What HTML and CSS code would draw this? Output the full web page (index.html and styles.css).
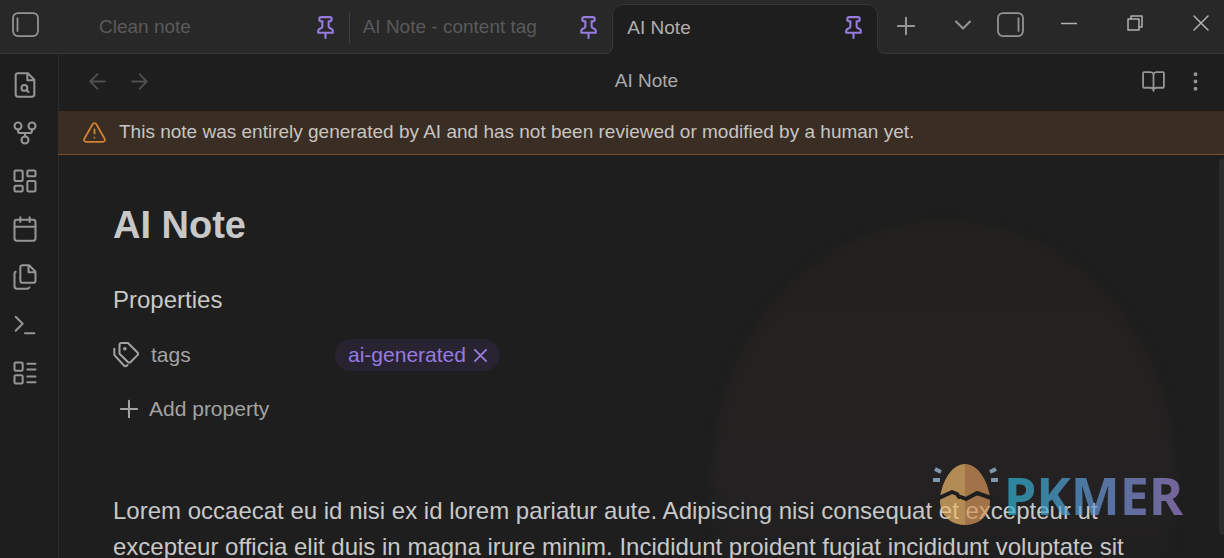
FILE: index.html
```html
<!DOCTYPE html>
<html lang="en">
<head>
<meta charset="utf-8">
<meta name="viewport" content="width=device-width, initial-scale=1">
<title>AI Note</title>
<link rel="stylesheet" href="styles.css">
</head>
<body>
<svg class="defs" aria-hidden="true">
  <symbol id="pin" viewBox="0 0 24 24"><path d="M12 17v5M9 10.76a2 2 0 0 1-1.11 1.79l-1.78.9A2 2 0 0 0 5 15.24V17h14v-1.76a2 2 0 0 0-1.11-1.79l-1.78-.9A2 2 0 0 1 15 10.76V6h1a2 2 0 0 0 0-4H8a2 2 0 0 0 0 4h1z"/></symbol>
  <symbol id="plus" viewBox="0 0 24 24"><path d="M5 12h14M12 5v14"/></symbol>
</svg>
<div class="app">
  <header class="titlebar">
    <button class="btn side-toggle" aria-label="Toggle left sidebar"><svg class="panel" viewBox="0 0 27 25"><rect x="1" y="1" width="25" height="23" rx="5"/><path d="M5.500 6v13"/></svg></button>
    <nav class="tabs" aria-label="Open notes">
      <a class="tab" href="#clean"><span class="tab-name">Clean note</span><svg class="icon pin"><use href="#pin"/></svg></a>
      <a class="tab divided" href="#content"><span class="tab-name">AI Note - content tag</span><svg class="icon pin"><use href="#pin"/></svg></a>
      <a class="tab active" href="#note" aria-current="page"><span class="tab-name">AI Note</span><svg class="icon pin"><use href="#pin"/></svg></a>
    </nav>
    <button class="btn new-tab" aria-label="New tab"><svg class="icon large"><use href="#plus"/></svg></button>
    <div class="window-tools">
      <button class="btn" aria-label="Tab list"><svg class="icon large" viewBox="0 0 24 24"><path d="m6 9 6 6 6-6"/></svg></button>
      <button class="btn" aria-label="Toggle right sidebar"><svg class="panel" viewBox="0 0 27 25"><rect x="1" y="1" width="25" height="23" rx="5"/><path d="M21.500 6v13"/></svg></button>
    </div>
    <div class="window-controls">
      <button class="btn" aria-label="Minimize"><svg class="control" viewBox="0 0 16 16"><path d="M0 8.500h16"/></svg></button>
      <button class="btn" aria-label="Restore"><svg class="control" viewBox="0 0 16 16"><path d="M1 4h11v11H1zM4 4V1h11v11h-3"/></svg></button>
      <button class="btn" aria-label="Close"><svg class="control" viewBox="0 0 16 16"><path d="m1 1 14 14M15 1 1 15"/></svg></button>
    </div>
  </header>

  <div class="workspace">
    <aside class="ribbon">
      <button class="btn" aria-label="Quick switcher"><svg class="icon large" viewBox="0 0 24 24"><path d="M14.500 2H6a2 2 0 0 0-2 2v16a2 2 0 0 0 2 2h12a2 2 0 0 0 2-2V7.500zM14 2v6h6"/><circle cx="11.500" cy="14.500" r="2.500"/><path d="m13.300 16.300 1.700 1.700"/></svg></button>
      <button class="btn" aria-label="Graph view"><svg class="icon large" viewBox="0 0 24 24"><circle cx="12" cy="18" r="3"/><circle cx="6" cy="6" r="3"/><circle cx="18" cy="6" r="3"/><path d="M18 9v1a2 2 0 0 1-2 2H8a2 2 0 0 1-2-2V9M12 12v3"/></svg></button>
      <button class="btn" aria-label="Canvas"><svg class="icon large" viewBox="0 0 24 24"><rect x="3" y="3" width="7" height="9" rx="1"/><rect x="14" y="3" width="7" height="5" rx="1"/><rect x="14" y="12" width="7" height="9" rx="1"/><rect x="3" y="16" width="7" height="5" rx="1"/></svg></button>
      <button class="btn" aria-label="Daily note"><svg class="icon large" viewBox="0 0 24 24"><rect x="3" y="4" width="18" height="18" rx="2"/><path d="M16 2v4M8 2v4M3 10h18"/></svg></button>
      <button class="btn" aria-label="Templates"><svg class="icon large" viewBox="0 0 24 24"><path d="M15.500 2H10a2 2 0 0 0-2 2v11a2 2 0 0 0 2 2h9a2 2 0 0 0 2-2V7.500zM15 2v6h6M4 7.500a1.500 1.500 0 0 0-1 1.500v11a2 2 0 0 0 2 2h9a2 2 0 0 0 1.700-1"/></svg></button>
      <button class="btn" aria-label="Command palette"><svg class="icon large" viewBox="0 0 24 24"><path d="m4 17 6-6-6-6M12 19h8"/></svg></button>
      <button class="btn" aria-label="Layouts"><svg class="icon large" viewBox="0 0 24 24"><rect x="3" y="3" width="7" height="7" rx="1"/><rect x="3" y="14" width="7" height="7" rx="1"/><path d="M14 4h7M14 9h7M14 15h7M14 20h7"/></svg></button>
    </aside>

    <main class="view">
      <div class="view-header">
        <div class="nav-buttons">
          <button class="btn" aria-label="Back" disabled><svg class="icon" viewBox="0 0 24 24"><path d="m12 19-7-7 7-7M19 12H5"/></svg></button>
          <button class="btn" aria-label="Forward" disabled><svg class="icon" viewBox="0 0 24 24"><path d="M5 12h14M12 5l7 7-7 7"/></svg></button>
        </div>
        <div class="view-title">AI Note</div>
        <div class="view-actions">
          <button class="btn" aria-label="Reading view"><svg class="icon" viewBox="0 0 24 24"><path d="M12 7v14M3 18a1 1 0 0 1-1-1V4a1 1 0 0 1 1-1h6a3 3 0 0 1 3 2 3 3 0 0 1 3-2h6a1 1 0 0 1 1 1v13a1 1 0 0 1-1 1h-6a4 4 0 0 0-3 1.500A4 4 0 0 0 9 18zM12 5v4"/></svg></button>
          <button class="btn" aria-label="More options"><svg class="icon" viewBox="0 0 24 24"><circle cx="12" cy="5" r="1"/><circle cx="12" cy="12" r="1"/><circle cx="12" cy="19" r="1"/></svg></button>
        </div>
      </div>
      <div class="banner" role="status">
        <svg class="icon" viewBox="0 0 24 24"><path d="m21.730 18-8-14a2 2 0 0 0-3.480 0l-8 14A2 2 0 0 0 4 21h16a2 2 0 0 0 1.730-3zM12 9v4M12 17h.01"/></svg>
        <span>This note was entirely generated by AI and has not been reviewed or modified by a human yet.</span>
      </div>
      <article class="note" id="note">
        <div class="glow"></div>
        <h1>AI Note</h1>
        <section class="properties">
          <h2>Properties</h2>
          <div class="property">
            <span class="property-key"><svg class="tag-icon" viewBox="0 0 26 26"><path d="M6.500 3a2 2 0 0 1 2-2H15l9.500 9.500a2 2 0 0 1 0 2.600l-6.900 6.900a2 2 0 0 1-2.800 0L6.500 11.700z"/><path d="M1.300 6.800v5.400a2 2 0 0 0 .6 1.400l9 9.900a2 2 0 0 0 3 0l.6-.5"/><circle cx="11.800" cy="6.800" r=".8"/></svg>tags</span>
            <span class="pill">ai-generated<button class="btn" aria-label="Remove tag"><svg class="remove" viewBox="0 0 14 14"><path d="m1 1 12 12M13 1 1 13"/></svg></button></span>
          </div>
          <button class="btn add"><svg class="icon large"><use href="#plus"/></svg>Add property</button>
        </section>
        <p>Lorem occaecat eu id nisi ex id lorem pariatur aute. Adipiscing nisi consequat et excepteur ut excepteur officia elit duis in magna irure minim. Incididunt proident fugiat incididunt voluptate sit</p>
        <div class="scrollbar"></div>
      </article>
    </main>
  </div>

  <div class="watermark">
    <svg class="egg" viewBox="0 0 65 62">
      <path fill="#f0b86a" d="M32 0C17 0 7 22 7 37s11 24 25 24z"/>
      <path fill="#d9965a" d="M32 0c15 0 25 22 25 37S46 61 32 61z"/>
      <path class="crack" d="m6 34 13-6 5 2 2 3M28 33l5 2 11-6 14 5"/>
      <path class="rays" d="m2 5 6 3M0 16h7M57 8l6-3M58 16h7"/>
    </svg>
    <span class="brand">PKMER</span>
  </div>
</div>
</body>
</html>
```
FILE: styles.css
```css
:root {
  --bg: #1e1e1e;
  --bar: #282828;
  --line: #363636;
  --text: #c8c8c8;
  --muted: #a3a3a3;
  --faint: #5a5a5a;
  --accent: #967be0;
}

* { box-sizing: border-box; }

body {
  margin: 0;
  background: var(--bg);
  color: var(--text);
  font-family: "Liberation Sans", Arial, sans-serif;
  font-size: 24px;
}

.defs { position: absolute; width: 0; height: 0; }

.app {
  position: relative;
  display: flex;
  flex-direction: column;
  height: 100vh;
  overflow: hidden;
}

svg { display: block; flex: none; fill: none; stroke: currentColor; stroke-linecap: round; stroke-linejoin: round; }
.icon { width: 25px; height: 25px; stroke-width: 1.75; }
.large { width: 28px; height: 28px; }
.panel { width: 27px; height: 25px; stroke-width: 1.75; }
.control { width: 16px; height: 16px; stroke-width: 1.5; }

.btn {
  display: flex;
  align-items: center;
  justify-content: center;
  padding: 0;
  border: 0;
  background: none;
  color: #959595;
  font: inherit;
}

.titlebar {
  display: flex;
  flex: none;
  height: 54px;
  background: var(--bar);
  border-bottom: 1px solid var(--line);
}
.side-toggle { width: 85px; padding: 0 46px 4px 12px; }
.tabs { display: flex; flex: 0 1 793px; min-width: 0; padding-top: 4px; }
.tab {
  position: relative;
  display: flex;
  flex: 1 1 0;
  align-items: center;
  justify-content: space-between;
  min-width: 0;
  height: 50px;
  padding: 0 11px 4px 14px;
  color: var(--faint);
  font-size: 19px;
  text-decoration: none;
}
.tab-name { overflow: hidden; white-space: nowrap; text-overflow: ellipsis; }
.pin { color: var(--accent); stroke-width: 2; }
.divided::before {
  content: "";
  position: absolute;
  left: 0;
  top: 9px;
  width: 1px;
  height: 30px;
  background: #404040;
}
.active {
  background: var(--bg);
  border: 1px solid var(--line);
  border-bottom: 0;
  border-radius: 10px 10px 0 0;
  color: #b0b0b0;
}
.active::before, .active::after {
  content: "";
  position: absolute;
  bottom: 0;
  width: 8px;
  height: 8px;
  border-bottom: 1px solid var(--line);
  clip-path: inset(0);
}
.active::before { right: 100%; border-right: 1px solid var(--line); border-bottom-right-radius: 8px; box-shadow: 3px 3px 0 var(--bg); }
.active::after { left: 100%; border-left: 1px solid var(--line); border-bottom-left-radius: 8px; box-shadow: -3px 3px 0 var(--bg); }
.new-tab { width: 56px; padding-bottom: 2px; }
.window-tools { display: flex; gap: 20px; margin-left: auto; padding-bottom: 4px; }
.window-controls { display: flex; gap: 50px; padding: 0 15px 8px 37px; }
.window-controls .btn { color: #b0b0b0; }

.workspace { display: flex; flex: 1; min-height: 0; }
.ribbon {
  display: flex;
  flex: none;
  flex-direction: column;
  gap: 12px;
  width: 59px;
  margin-right: -1px;
  padding: 13px 9px 0 0;
  border-right: 1px solid #2c2c2c;
}
.ribbon .btn { flex: none; height: 36px; }

.view { display: flex; flex: 1; flex-direction: column; min-width: 0; }
.view-header {
  display: grid;
  grid-template-columns: 1fr auto 1fr;
  align-items: center;
  flex: none;
  height: 57px;
  padding: 0 16px 2px 27px;
}
.nav-buttons, .view-actions { display: flex; gap: 17px; }
.nav-buttons .btn { color: #505050; }
.view-actions { justify-content: flex-end; }
.view-title { color: #aaa; font-size: 19px; padding-bottom: 2px; }

.banner {
  position: relative;
  display: flex;
  align-items: center;
  flex: none;
  gap: 12px;
  height: 44px;
  padding: 0 24px;
  background: #3a2d23;
  border-bottom: 1px solid #775127;
  color: #c8c5c1;
  font-size: 19px;
}
.banner .icon { color: #d28434; }
.banner span { padding-bottom: 2px; }

.note {
  position: relative;
  flex: 1;
  min-height: 0;
  overflow: hidden;
  padding: 46px 54px 0 55px;
}
.note > :not(.glow):not(.scrollbar) { position: relative; }
h1 { margin: 0; font-size: 38px; line-height: 48px; }
.glow {
  position: absolute;
  top: 66px;
  left: 56%;
  width: 40%;
  height: 520px;
  border-radius: 50%;
  background: linear-gradient(#22211e, #242120 25%, #232122 50%, #1f1f1f 75%);
  filter: blur(5px);
}
.scrollbar {
  position: absolute;
  top: 4px;
  right: 0;
  width: 5px;
  height: 376px;
  border-radius: 4px 0 0 4px;
  background: #2b2b2b;
}
.properties { padding-top: 33px; }
h2 { margin: 0; font-size: 24px; font-weight: 400; line-height: 36px; }
.property { display: flex; align-items: center; margin-top: 21px; color: var(--muted); font-size: 21px; }
.property-key { display: flex; align-items: center; gap: 12px; width: 222px; }
.tag-icon { width: 26px; height: 26px; stroke-width: 2; }
.pill {
  display: flex;
  align-items: center;
  gap: 8px;
  height: 32px;
  padding: 0 13px;
  border-radius: 16px;
  background: #282330;
  color: var(--accent);
}
.pill .btn { color: inherit; }
.remove { width: 13px; height: 13px; stroke-width: 2; }
.add { gap: 6px; height: 36px; margin-top: 20px; padding-left: 2px; color: var(--muted); font-size: 21px; }
p { margin: 66px 0 0; line-height: 36px; }

.watermark {
  position: absolute;
  right: 41px;
  bottom: 32px;
  display: flex;
  align-items: center;
  gap: 6px;
  opacity: 0.7;
  pointer-events: none;
}
.egg { width: 65px; height: 62px; stroke: none; }
.crack { stroke: var(--bg); stroke-width: 4; }
.rays { stroke: #a8c8e4; stroke-width: 4; stroke-linecap: butt; }
.brand {
  background: linear-gradient(90deg, #2bb4d0, #6499d8 50%, #9b83cf);
  background-clip: text;
  -webkit-background-clip: text;
  color: transparent;
  font: 700 52px/62px "Noto Sans", sans-serif;
}
```
